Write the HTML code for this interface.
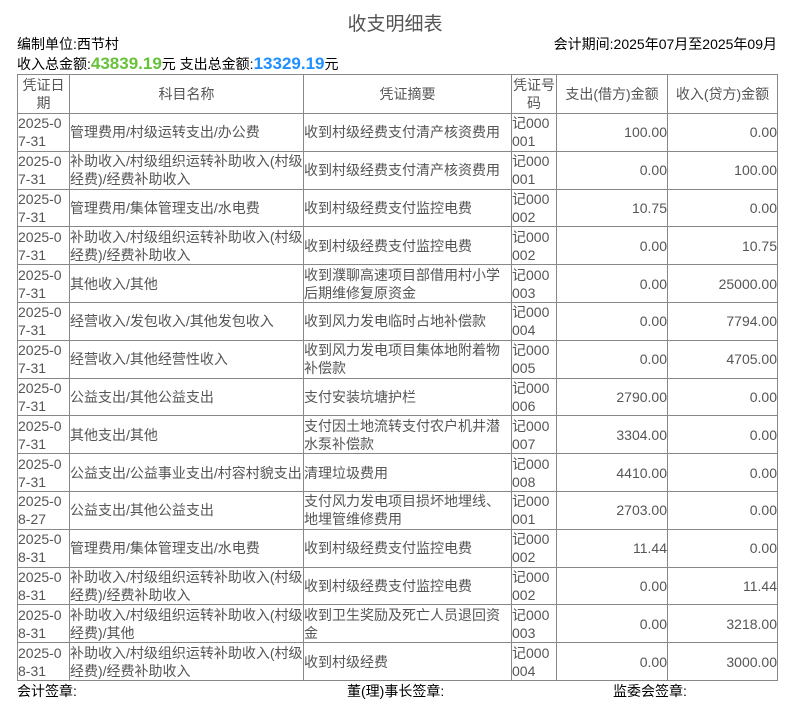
<!DOCTYPE html>
<html><head><meta charset="utf-8">
<style>
body{margin:0;width:790px;height:718px;background:#fff;font-family:"Liberation Sans","Noto Sans CJK SC",sans-serif;color:#000;position:relative;overflow:hidden}
.t{position:absolute;left:0;width:790px;top:9px;text-align:center;font-size:19px;color:#555}
.a{position:absolute;font-size:14px;line-height:17px}
.g{color:#67c23a;font-weight:bold;font-size:17px}
.b{color:#1e90ff;font-weight:bold;font-size:17px}
table{position:absolute;left:17px;top:74px;border-collapse:collapse;table-layout:fixed;width:761px;font-size:14px;color:#555}
td,th{border:1px solid #888;padding:0;line-height:18px;font-weight:normal;vertical-align:middle;word-break:break-all;overflow:hidden}
th{text-align:center;height:38px}
td{height:36.8px}
td.r{text-align:right}
</style></head><body>
<div class="t">收支明细表</div>
<div class="a" style="left:17px;top:36px">编制单位:西节村</div>
<div class="a" style="right:13px;top:36px">会计期间:2025年07月至2025年09月</div>
<div class="a" style="left:17px;top:55px">收入总金额:<span class="g">43839.19</span>元 支出总金额:<span class="b">13329.19</span>元</div>
<table>
<colgroup><col style="width:52px"><col style="width:234px"><col style="width:208px"><col style="width:45px"><col style="width:111px"><col style="width:110px"></colgroup>
<tr><th>凭证日期</th><th>科目名称</th><th>凭证摘要</th><th>凭证号码</th><th>支出(借方)金额</th><th>收入(贷方)金额</th></tr>
<tr><td>2025-07-31</td><td>管理费用/村级运转支出/办公费</td><td>收到村级经费支付清产核资费用</td><td>记000001</td><td class="r">100.00</td><td class="r">0.00</td></tr>
<tr><td>2025-07-31</td><td>补助收入/村级组织运转补助收入(村级经费)/经费补助收入</td><td>收到村级经费支付清产核资费用</td><td>记000001</td><td class="r">0.00</td><td class="r">100.00</td></tr>
<tr><td>2025-07-31</td><td>管理费用/集体管理支出/水电费</td><td>收到村级经费支付监控电费</td><td>记000002</td><td class="r">10.75</td><td class="r">0.00</td></tr>
<tr><td>2025-07-31</td><td>补助收入/村级组织运转补助收入(村级经费)/经费补助收入</td><td>收到村级经费支付监控电费</td><td>记000002</td><td class="r">0.00</td><td class="r">10.75</td></tr>
<tr><td>2025-07-31</td><td>其他收入/其他</td><td>收到濮聊高速项目部借用村小学后期维修复原资金</td><td>记000003</td><td class="r">0.00</td><td class="r">25000.00</td></tr>
<tr><td>2025-07-31</td><td>经营收入/发包收入/其他发包收入</td><td>收到风力发电临时占地补偿款</td><td>记000004</td><td class="r">0.00</td><td class="r">7794.00</td></tr>
<tr><td>2025-07-31</td><td>经营收入/其他经营性收入</td><td>收到风力发电项目集体地附着物补偿款</td><td>记000005</td><td class="r">0.00</td><td class="r">4705.00</td></tr>
<tr><td>2025-07-31</td><td>公益支出/其他公益支出</td><td>支付安装坑塘护栏</td><td>记000006</td><td class="r">2790.00</td><td class="r">0.00</td></tr>
<tr><td>2025-07-31</td><td>其他支出/其他</td><td>支付因土地流转支付农户机井潜水泵补偿款</td><td>记000007</td><td class="r">3304.00</td><td class="r">0.00</td></tr>
<tr><td>2025-07-31</td><td>公益支出/公益事业支出/村容村貌支出</td><td>清理垃圾费用</td><td>记000008</td><td class="r">4410.00</td><td class="r">0.00</td></tr>
<tr><td>2025-08-27</td><td>公益支出/其他公益支出</td><td>支付风力发电项目损坏地埋线、地埋管维修费用</td><td>记000001</td><td class="r">2703.00</td><td class="r">0.00</td></tr>
<tr><td>2025-08-31</td><td>管理费用/集体管理支出/水电费</td><td>收到村级经费支付监控电费</td><td>记000002</td><td class="r">11.44</td><td class="r">0.00</td></tr>
<tr><td>2025-08-31</td><td>补助收入/村级组织运转补助收入(村级经费)/经费补助收入</td><td>收到村级经费支付监控电费</td><td>记000002</td><td class="r">0.00</td><td class="r">11.44</td></tr>
<tr><td>2025-08-31</td><td>补助收入/村级组织运转补助收入(村级经费)/其他</td><td>收到卫生奖励及死亡人员退回资金</td><td>记000003</td><td class="r">0.00</td><td class="r">3218.00</td></tr>
<tr><td>2025-08-31</td><td>补助收入/村级组织运转补助收入(村级经费)/经费补助收入</td><td>收到村级经费</td><td>记000004</td><td class="r">0.00</td><td class="r">3000.00</td></tr>
</table>
<div class="a" style="left:17px;top:683px">会计签章:</div>
<div class="a" style="left:347px;top:683px">董(理)事长签章:</div>
<div class="a" style="left:613px;top:683px">监委会签章:</div>
</body></html>
